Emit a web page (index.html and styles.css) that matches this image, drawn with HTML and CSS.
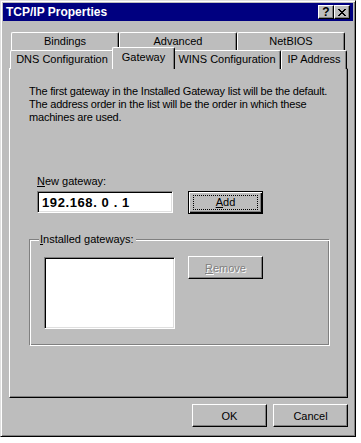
FILE: index.html
```html
<!DOCTYPE html>
<html>
<head>
    <meta charset="utf-8" />
    <link rel="stylesheet" href="styles.css">
</head>
<body>
<div class="window">
    <div class="titlebar">
        <span class="title">TCP/IP Properties</span>
        <div class="caption-buttons">
            <div class="cap-btn help">?</div>
            <div class="cap-btn close">
                <svg width="8" height="7" viewBox="0 0 8 7">
                    <path d="M0 0h2v1h-2zM6 0h2v1h-2zM1 1h2v1h-2zM5 1h2v1h-2zM2 2h4v1h-4zM3 3h2v1h-2zM2 4h4v1h-4zM1 5h2v1h-2zM5 5h2v1h-2zM0 6h2v1h-2zM6 6h2v1h-2z" fill="#000"/>
                </svg>
            </div>
        </div>
    </div>
    <div class="body">
        <div class="tabs">
            <div class="tab-row back">
                <div class="tab t-bindings">Bindings</div>
                <div class="tab t-advanced">Advanced</div>
                <div class="tab t-netbios">NetBIOS</div>
            </div>
            <div class="tab-row front">
                <div class="tab t-dns">DNS Configuration</div>
                <div class="tab t-gateway selected">Gateway</div>
                <div class="tab t-wins">WINS Configuration</div>
                <div class="tab t-ip">IP Address</div>
            </div>
        </div>
        <div class="panel">
            <p class="info">The first gateway in the Installed Gateway list will be the default.<br>The address order in the list will be the order in which these<br>machines are used.</p>
            <div class="field-label"><u>N</u>ew gateway:</div>
            <div class="row">
                <div class="ip-field">192.168. 0 . 1</div>
                <div class="btn default"><span class="focus"><u>A</u>dd</span></div>
            </div>
            <div class="group">
                <div class="legend"><u>I</u>nstalled gateways:</div>
                <div class="row group-row">
                    <div class="listbox"></div>
                    <div class="btn disabled"><span><u>R</u>emove</span></div>
                </div>
            </div>
        </div>
        <div class="actions">
            <div class="btn">OK</div>
            <div class="btn">Cancel</div>
        </div>
    </div>
</div>
</body>
</html>
```

FILE: styles.css
```css
body{
    margin: 0;
    background: #fff;
    font-family: "Liberation Sans", Arial, sans-serif;
    font-size: 11px;
    color: #000;
}
.window{
    width: 356px;
    height: 437px;
    box-sizing: border-box;
    padding: 2px;
    background: #bdbdbd;
    border: 1px solid;
    border-color: #dfdfdf #000 #000 #dfdfdf;
    box-shadow: inset 1px 1px #fff, inset -1px -1px #808080;
}
.titlebar{
    height: 18px;
    background: #000080;
    display: flex;
    align-items: center;
    justify-content: space-between;
    padding: 0 3px 0 3px;
}
.title{
    color: #fff;
    font-weight: bold;
    font-size: 12px;
}
.caption-buttons{
    display: flex;
}
.cap-btn{
    width: 16px;
    height: 14px;
    box-sizing: border-box;
    background: #bdbdbd;
    border: 1px solid;
    border-color: #fff #000 #000 #fff;
    box-shadow: inset -1px -1px #808080;
    display: flex;
    align-items: center;
    justify-content: center;
    font-weight: bold;
    font-size: 12px;
    line-height: 12px;
}
.body{
    padding: 11px 5px 0 6px;
}
.tabs{
    height: 36px;
}
.tab-row{
    display: flex;
    height: 18px;
}
.tab-row.back{
    padding-left: 2px;
}
.tab{
    box-sizing: border-box;
    height: 19px;
    border: 1px solid;
    border-bottom: none;
    border-color: #fff #000 #000 #fff;
    border-radius: 2px 2px 0 0;
    box-shadow: inset -1px 0 #808080;
    display: flex;
    justify-content: center;
    padding-top: 2px;
    background: #bdbdbd;
}
.t-bindings{ width: 108px; }
.t-advanced{ width: 118px; }
.t-netbios{ width: 108px; }
.t-dns{ width: 104px; margin-left: 1px; }
.t-wins{ width: 108px; }
.t-ip{ width: 66px; }
.tab.selected{
    position: relative;
    z-index: 1;
    height: 22px;
    margin-top: -3px;
    margin-left: -2px;
    margin-right: -2px;
    width: 63px;
    padding-top: 3px;
}
.panel{
    height: 330px;
    box-sizing: border-box;
    border: 1px solid;
    border-color: #fff #000 #000 #fff;
    box-shadow: inset -1px -1px #808080;
    padding: 16px 0 0 19px;
}
.info{
    margin: 0;
    line-height: 13px;
    letter-spacing: -0.2px;
    white-space: nowrap;
}
.field-label{
    margin: 51px 0 0 8px;
    line-height: 13px;
}
.row{
    display: flex;
    align-items: flex-start;
}
.ip-field{
    margin: 3px 0 0 8px;
    width: 136px;
    height: 22px;
    box-sizing: border-box;
    background: #fff;
    border: 1px solid;
    border-color: #808080 #fff #fff #808080;
    box-shadow: inset 1px 1px #000, inset -1px -1px #dfdfdf;
    font-weight: bold;
    font-size: 13px;
    letter-spacing: 0.6px;
    padding: 3px 0 0 4px;
}
.btn{
    width: 75px;
    height: 23px;
    box-sizing: border-box;
    border: 1px solid;
    border-color: #fff #000 #000 #fff;
    box-shadow: inset -1px -1px #808080;
    display: flex;
    align-items: center;
    justify-content: center;
    background: #bdbdbd;
}
.btn.default{
    margin: 3px 0 0 15px;
    border: 1px solid #000;
    box-shadow: inset 1px 1px #fff, inset -1px -1px #000, inset -2px -2px #808080;
}
.focus{
    width: 65px;
    height: 15px;
    box-sizing: border-box;
    border: 1px dotted #000;
    text-align: center;
    line-height: 13px;
}
.btn.disabled{
    color: #808080;
    text-shadow: 1px 1px #fff;
    margin: 0 0 0 13px;
}
.group{
    margin: 25px 0 0 0;
    width: 301px;
    height: 107px;
    box-sizing: border-box;
    border: 1px solid;
    border-color: #808080 #fff #fff #808080;
    box-shadow: inset 1px 1px #fff, inset -1px -1px #808080;
    padding-left: 14px;
}
.legend{
    width: fit-content;
    background: #bdbdbd;
    margin: -7px 0 0 -5px;
    padding: 0 2px 0 1px;
    line-height: 13px;
}
.group-row{
    margin-top: 10px;
}
.listbox{
    margin-top: 1px;
    width: 131px;
    height: 72px;
    box-sizing: border-box;
    background: #fff;
    border: 1px solid;
    border-color: #808080 #fff #fff #808080;
    box-shadow: inset 1px 1px #000, inset -1px -1px #dfdfdf;
}
.actions{
    display: flex;
    justify-content: flex-end;
    gap: 6px;
    margin-top: 6px;
}
```
